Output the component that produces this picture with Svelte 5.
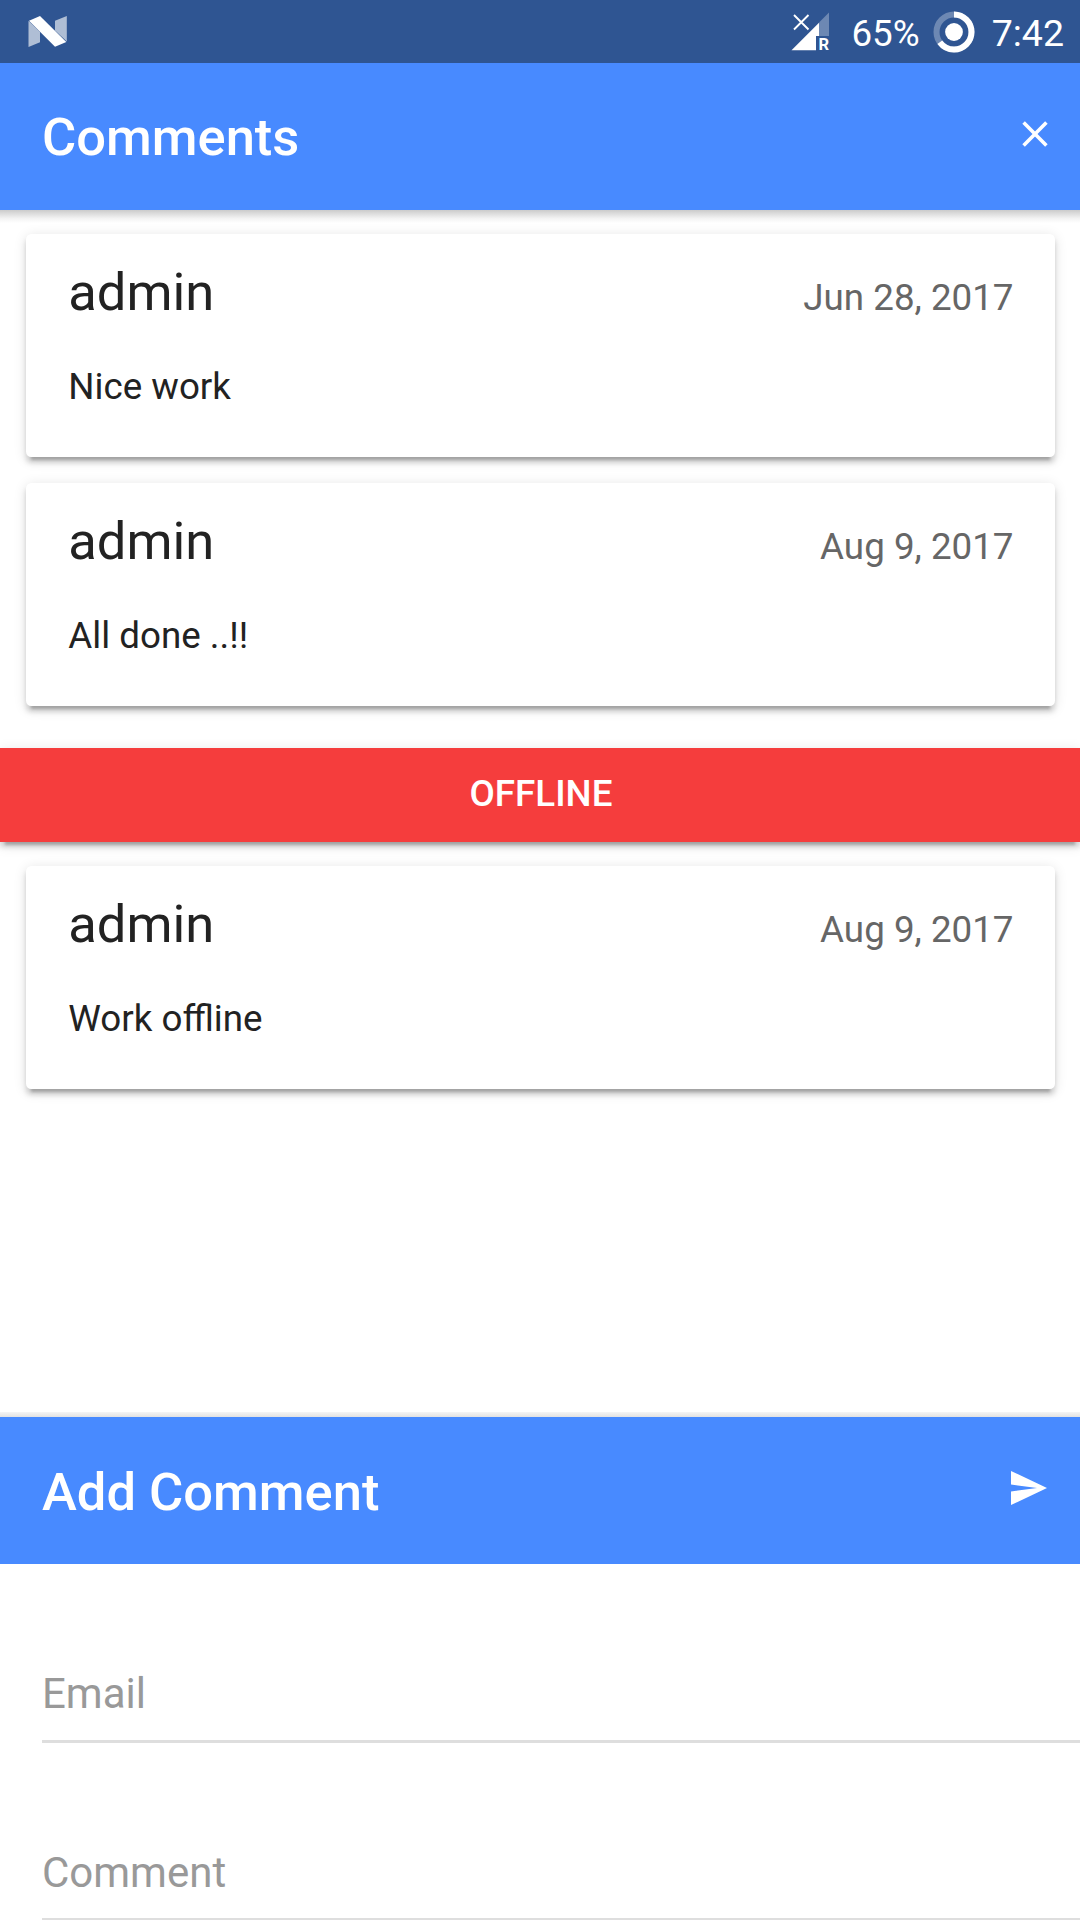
<script>
  const earlier = [
    { author: 'admin', date: 'Jun 28, 2017', text: 'Nice work' },
    { author: 'admin', date: 'Aug 9, 2017', text: 'All done ..!!' },
  ];
  const offline = [{ author: 'admin', date: 'Aug 9, 2017', text: 'Work offline' }];
</script>

{#snippet card(comment)}
  <article class="card">
    <header class="card-head">
      <h2>{comment.author}</h2>
      <time>{comment.date}</time>
    </header>
    <p>{comment.text}</p>
  </article>
{/snippet}

<div class="screen">
  <div class="status">
    <svg class="nougat" width="42" height="34" viewBox="27 15 42 34">
      <path d="M28.5 20.7 40 32v10.2L28.5 47z" fill="#fff" opacity=".62" />
      <path d="M55 20.8 66.8 16v25.5L55 30.5z" fill="#fff" opacity=".62" />
      <path d="M29 20.8 40 16l26.3 26L55 46.8z" fill="#fff" />
    </svg>
    <div class="status-right">
      <svg class="signal" width="40" height="42" viewBox="791 11 40 42">
        <path d="M829 12.5V36H819V22.5z" fill="#fff" opacity=".3" />
        <path d="M791.5 50.3 819 22.8V36h-3v14.3z" fill="#fff" />
        <path d="M794 15l14.5 14.5M808.5 15 794 29.5" stroke="#fff" stroke-width="1.9" />
        <text x="818.4" y="49.8">R</text>
      </svg>
      <span class="percent">65%</span>
      <svg class="battery" width="42" height="42" viewBox="-21 -21 42 42">
        <circle r="17.5" fill="none" stroke="#fff" stroke-width="6" opacity=".3" />
        <circle
          r="17.5"
          fill="none"
          stroke="#fff"
          stroke-width="6"
          pathLength="100"
          stroke-dasharray="65 35"
          transform="rotate(-90)"
        />
        <circle r="8.9" fill="#fff" />
      </svg>
      <span class="clock">7:42</span>
    </div>
  </div>

  <header class="toolbar top">
    <h1>Comments</h1>
    <button aria-label="Close">
      <svg class="close" width="26" height="26" viewBox="0 0 26 26">
        <path d="M1.6 1.6l22.8 22.8M24.4 1.6 1.6 24.4" stroke="#fff" stroke-width="3.6" />
      </svg>
    </button>
  </header>

  <main>
    {#each earlier as comment}
      {@render card(comment)}
    {/each}
    <div class="banner">OFFLINE</div>
    {#each offline as comment}
      {@render card(comment)}
    {/each}
  </main>

  <section class="composer">
    <div class="toolbar bottom">
      <h1>Add Comment</h1>
      <button aria-label="Send">
        <svg class="send" width="36" height="34" viewBox="0 0 36 34">
          <path d="M0 0 36 17 0 34V20.5L26 17 0 13.5z" fill="#fff" />
        </svg>
      </button>
    </div>
    <form>
      <label><input type="email" placeholder="Email" /></label>
      <label><input type="text" placeholder="Comment" /></label>
    </form>
  </section>
</div>

<style>
  :global(body) {
    background: #fff;
  }

  .screen {
    display: flex;
    flex-direction: column;
    width: 1080px;
    height: 1920px;
    overflow: hidden;
    background: #fff;
    color: #222;
    font-family: Roboto, 'Liberation Sans', sans-serif;
    font-size: 36.75px;
  }

  .status {
    display: flex;
    flex: none;
    align-items: center;
    justify-content: space-between;
    box-sizing: border-box;
    height: 63px;
    padding: 0 16px 0 27px;
    background: #2f5592;
    color: #fff;
  }

  .status-right {
    display: flex;
    align-items: center;
    line-height: 63px;
  }

  .signal text {
    fill: #fff;
    font: 700 16.5px Roboto, sans-serif;
  }

  .percent {
    margin: 3px 13px 0 20px;
  }

  .clock {
    margin: 3px 0 0 17px;
    font-size: 37.5px;
  }

  .toolbar {
    position: relative;
    display: flex;
    flex: none;
    align-items: center;
    justify-content: space-between;
    box-sizing: border-box;
    height: 147px;
    padding: 0 33px 0 42px;
    background: #488aff;
    color: #fff;
  }

  .toolbar::after {
    position: absolute;
    left: 0;
    width: 100%;
    content: '';
  }

  .top {
    padding-right: 32px;
  }

  .top::after {
    top: 100%;
    height: 13px;
    background: linear-gradient(#cbcbcb, #dedede 30%, #f3f3f3 65%, #fff);
  }

  .bottom::after {
    bottom: 100%;
    height: 5px;
    background: linear-gradient(#f5f5f5, #e2e2e2);
  }

  h1 {
    margin: 0;
    font-size: 52.5px;
    font-weight: 500;
    line-height: 60px;
  }

  .bottom h1 {
    padding-top: 2px;
  }

  button {
    display: flex;
    padding: 0 0 6px;
    border: 0;
    background: none;
  }

  main {
    flex: 1;
    padding-top: 23.6px;
  }

  .card {
    box-sizing: border-box;
    height: 223.2px;
    margin: 0 25px 26px 26px;
    padding: 28.4px 41.5px 0 42.3px;
    border-radius: 5.25px;
    background: #fff;
  }

  .card,
  .banner {
    box-shadow:
      0 5.25px 5.25px 0 rgba(0, 0, 0, 0.14),
      0 7.9px 2.6px -5.25px rgba(0, 0, 0, 0.2),
      0 2.6px 13.1px 0 rgba(0, 0, 0, 0.12);
  }

  .card-head {
    display: flex;
    align-items: baseline;
    justify-content: space-between;
    height: 60px;
  }

  h2 {
    margin: 0;
    font-size: 52.5px;
    font-weight: 400;
    line-height: 60px;
  }

  time {
    color: #666;
  }

  p {
    margin: 39.9px 0 0;
    line-height: 50px;
  }

  .banner {
    height: 94.5px;
    margin: 42px 0 23.6px;
    padding-left: 2px;
    background: #f53d3d;
    color: #fff;
    font-weight: 500;
    line-height: 91px;
    text-align: center;
  }

  .composer {
    flex: none;
    height: 503px;
  }

  label {
    display: flex;
    align-items: flex-end;
    box-sizing: border-box;
    height: 178.5px;
    margin-left: 42px;
    border-bottom: 3px solid #dedede;
  }

  input {
    flex: 1;
    height: 50px;
    margin-bottom: 20.4px;
    padding: 0;
    border: 0;
    outline: 0;
    background: none;
    color: #222;
    font: inherit;
    font-size: 42px;
    line-height: 50px;
  }

  input::placeholder {
    color: #999;
  }
</style>
